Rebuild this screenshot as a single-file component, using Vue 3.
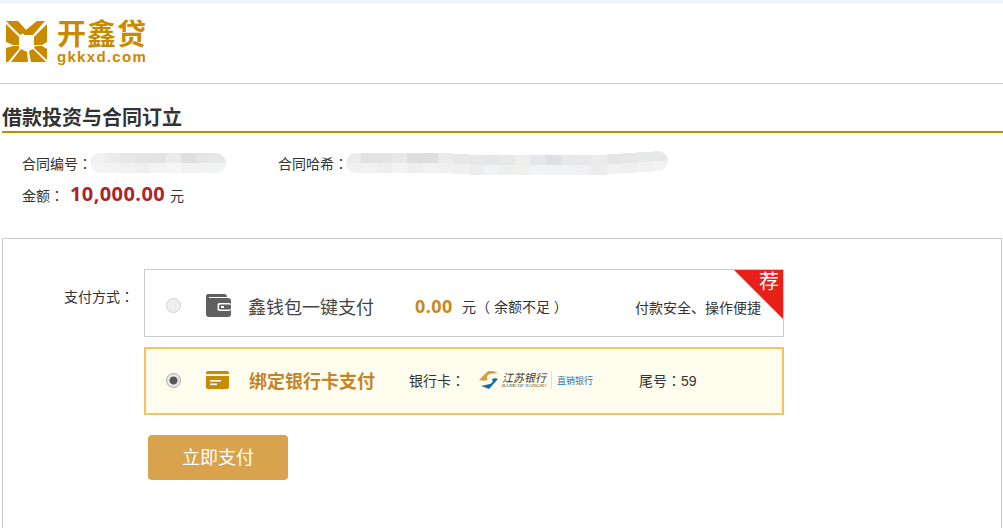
<script setup>
// 打码区域的马赛克色块：上半色、下半色、纵向偏移
const blurA = [
  ['#f1f1f1', '#f4f4f4', 0], ['#ececec', '#f3f3f3', 0], ['#e6e6e6', '#f1f1f1', 0], ['#e4e4e4', '#efefef', 0],
  ['#e3e3e3', '#f4f4f4', 0], ['#ebebeb', '#f5f5f5', 0], ['#dfdfdf', '#f2f2f2', 0], ['#e5e5e5', '#f3f3f3', 0], ['#e6e7e7', '#f1f2f2', 0]
]
const blurB = [
  ['#ebebeb', '#f0f0f0', 0], ['#e2e2e2', '#f1f1f1', 0], ['#e3e3e3', '#eeeeee', 0], ['#e8e8e8', '#f3f3f3', 0],
  ['#dddddd', '#eeeeee', 0], ['#dedede', '#f1f1f1', 0], ['#ebebeb', '#f0f0f0', 0], ['#e8e8e8', '#f0f0f0', 1],
  ['#e7e7e7', '#ededed', 2], ['#e5e7e7', '#f0f2f3', 2], ['#e8e8e6', '#ecefee', 2], ['#efeeec', '#f0f0ee', 2],
  ['#e6e7ea', '#f2f3f4', 2], ['#dfe0e3', '#f1f2f4', 2], ['#e8e8ea', '#f1f2f2', 2], ['#e9e9eb', '#f1f1f1', 2],
  ['#ebebeb', '#ececec', 2], ['#e6e6e6', '#f2f2f2', 1], ['#e6e6e6', '#f0f0f0', 0], ['#e7e8e8', '#f1f1f1', -1],
  ['#e7e8e8', '#f2f2f2', -2]
]
const blockStyle = (c) => ({
  background: `linear-gradient(${c[0]} 50%, ${c[1]} 50%)`,
  transform: `translateY(${c[2]}px)`
})
// logo 的八块色块
const logoPieces = [
  '0,0 12,0 21,10 14,14',
  '0,3 13,16 13,24 7,24 0,21',
  '16,12 31,0 39,0 27,14 19,14',
  '41,3 28,16 28,24 36,24 41,21',
  '0,27 7,25 13,25 13,28 2,41 0,41',
  '5,41 15,28 21,31 22,41',
  '25,41 23,30 27,28 40,41',
  '29,25 36,25 41,28 41,39 28,27'
]
</script>

<template>
  <div class="page">
    <div class="top-band"></div>
    <header class="header">
      <div class="logo">
        <svg class="logo-mark" viewBox="0 0 41 42" width="41" height="42">
          <polygon v-for="(p, i) in logoPieces" :key="i" :points="p" fill="#c98a00" />
        </svg>
        <div class="logo-text">
          <div class="logo-cn">开鑫贷</div>
          <div class="logo-en">gkkxd.com</div>
        </div>
      </div>
    </header>

    <h2 class="title">借款投资与合同订立</h2>

    <div class="info">
      <div class="info-row">
        <div class="field field-no">
          <span>合同编号<span class="colon">：</span></span>
          <div class="mosaic mosaic-a">
            <i v-for="(c, i) in blurA" :key="i" :style="blockStyle(c)"></i>
          </div>
        </div>
        <div class="field">
          <span>合同哈希<span class="colon">：</span></span>
          <div class="mosaic mosaic-b">
            <i v-for="(c, i) in blurB" :key="i" :style="blockStyle(c)"></i>
          </div>
        </div>
      </div>
      <div class="amount-row">
        <span>金额<span class="colon">：</span></span>
        <strong class="amount">10,000.00</strong>
        <span class="unit">元</span>
      </div>
    </div>

    <section class="pay-box">
      <div class="pay-label">支付方式<span class="colon">：</span></div>
      <div class="pay-main">
        <div class="option option-wallet">
          <span class="radio"></span>
          <svg class="opt-icon" viewBox="0 0 25 23" width="25" height="23">
            <path fill="#606060" d="M2 0h16c2 0 3 1 3 3H3.500C2.500 3 2.500 4 3.500 4H22c2 0 3 1 3 3v13c0 2-1 3-3 3H3c-2 0-3-1-3-3V2C0 1 1 0 2 0z" />
            <rect x="11.500" y="9" width="13.500" height="8" rx="2" fill="#fff" />
            <rect x="13" y="10.500" width="12" height="5" rx="1.500" fill="#606060" />
            <rect x="15" y="12" width="3" height="2" fill="#fff" />
          </svg>
          <span class="opt-name">鑫钱包一键支付</span>
          <strong class="balance">0.00</strong>
          <span class="balance-note">元（ 余额不足 ）</span>
          <span class="safe">付款安全、操作便捷</span>
          <div class="corner"><span>荐</span></div>
        </div>

        <div class="option option-on">
          <span class="radio radio-on"></span>
          <svg class="opt-icon card-icon" viewBox="0 0 23 18" width="23" height="18">
            <path fill="#c98a00" d="M0 2C0 .8.800 0 2 0h19c1.200 0 2 .8 2 2v1H0zM0 5h23v11c0 1.200-.8 2-2 2H2c-1.200 0-2-.8-2-2z" />
            <rect x="4" y="9" width="11" height="1.600" fill="#fff" />
            <rect x="4" y="12.500" width="7" height="1.600" fill="#fff" />
          </svg>
          <span class="opt-name opt-name-on">绑定银行卡支付</span>
          <span class="card-label">银行卡<span class="colon">：</span></span>
          <div class="bank">
            <svg viewBox="0 0 20 20" width="20" height="20">
              <path fill="#d3a043" d="M0 10 9 1h5l5 2-8 1c-3 1-4 4-2 6-3 1-6 1-9 0z" />
              <path fill="#1769ad" d="M19 9l-9 10-5-2-3-1 9-2c3-1 3-3 2-5 2-1 4-1 6 0z" />
            </svg>
            <div class="bank-name">
              <span class="bank-cn">江苏银行</span>
              <span class="bank-en">BANK OF JIANGSU</span>
            </div>
            <span class="bank-tag">直销银行</span>
          </div>
          <span class="tail">尾号<span class="colon">：</span>59</span>
        </div>

        <button class="pay-btn" type="button">立即支付</button>
      </div>
    </section>
  </div>
</template>

<style>
html, body {
  margin: 0;
  background: #fff;
  overflow: hidden;
}
</style>

<style scoped>
.page {
  width: 1003px;
  height: 528px;
  overflow: hidden;
  color: #333;
  font-family: "Liberation Sans", "Noto Sans CJK SC", sans-serif;
  font-size: 14px;
}

/* 简中字体的冒号靠左，这里要居中 */
.colon {
  font-family: "Noto Sans CJK TC", sans-serif;
}

.top-band {
  height: 3px;
  background: #eef3f9;
}

.header {
  height: 81px;
  box-sizing: border-box;
  border-bottom: 1px solid #ccc;
  padding: 18px 0 0 6px;
}

.logo {
  display: flex;
  gap: 10px;
}

.logo-mark {
  display: block;
  flex: none;
}

.logo-text {
  color: #c98a00;
  font-weight: 700;
}

.logo-cn {
  font-size: 29px;
  line-height: 28px;
  letter-spacing: 1px;
}

.logo-en {
  font-size: 15px;
  line-height: 15px;
  letter-spacing: 1.300px;
}

.title {
  margin: 0 0 0 2px;
  padding-top: 20px;
  height: 27px;
  line-height: 29px;
  box-sizing: content-box;
  border-bottom: 2px solid #c98a00;
  font-size: 20px;
  font-weight: 700;
  color: #333;
}

.info {
  padding: 18px 0 0 22px;
}

.info-row {
  display: flex;
  height: 24px;
  align-items: center;
}

.field {
  display: flex;
  align-items: center;
}

.field-no {
  width: 256px;
}

.mosaic {
  display: flex;
  height: 20px;
}

.mosaic i {
  display: block;
  flex: 1;
  height: 100%;
}

.mosaic i:first-child {
  border-radius: 10px 0 0 10px;
}

.mosaic i:last-child {
  border-radius: 0 10px 10px 0;
}

.mosaic-a {
  margin-left: -2px;
  width: 136px;
}

.mosaic-b {
  margin-left: -2px;
  width: 322px;
}

.amount-row {
  display: flex;
  align-items: baseline;
  margin-top: 5px;
}

.amount {
  margin: 0 5px 0 6px;
  font-family: "Open Sans", sans-serif;
  font-size: 20px;
  letter-spacing: .4px;
  font-weight: 700;
  color: #a9262c;
}

.unit {
  font-size: 14px;
}

.pay-box {
  display: flex;
  height: 320px;
  box-sizing: border-box;
  margin: 31px 1px 0 2px;
  padding: 30px 0 0 61px;
  border: 1px solid #ccc;
}

.pay-label {
  width: 80px;
  flex: none;
  padding-top: 19px;
  font-size: 14px;
  line-height: 16px;
  white-space: nowrap;
}

.pay-main {
  width: 640px;
}

.option {
  position: relative;
  display: flex;
  align-items: center;
  height: 68px;
  box-sizing: border-box;
  border: 1px solid #ccc;
  overflow: hidden;
}

.option-wallet {
  padding-top: 5px;
}

.option-on {
  margin-top: 10px;
  padding-bottom: 2px;
  border: 2px solid #f3c35c;
  background: #fffeee;
}

.radio {
  flex: none;
  width: 15px;
  height: 15px;
  margin-left: 21px;
  box-sizing: border-box;
  border: 1px solid #d0d0d0;
  border-radius: 50%;
  background: #efefef;
}

.radio-on {
  margin-left: 20px;
  border-color: #aaa;
  background: radial-gradient(circle, #555 0 3.5px, #e8e8e8 4.500px);
}

.opt-icon {
  flex: none;
  margin-left: 25px;
}

.card-icon {
  margin-left: 25px;
}

.opt-name {
  margin-left: 17px;
  width: 167px;
  font-size: 18px;
  color: #444;
  white-space: nowrap;
}

.opt-name-on {
  margin-left: 20px;
  width: 160px;
  font-weight: 700;
  color: #c4852a;
}

.balance {
  font-family: "Open Sans", sans-serif;
  font-size: 18px;
  letter-spacing: .4px;
  color: #c98a1e;
  width: 47px;
}

.balance-note {
  width: 173px;
  font-size: 14px;
  white-space: nowrap;
}

.safe {
  padding-top: 2px;
  font-size: 14px;
  white-space: nowrap;
}

.corner {
  position: absolute;
  top: -1px;
  right: -1px;
  width: 0;
  height: 0;
  border-top: 51px solid #e8201a;
  border-left: 51px solid transparent;
}

.corner span {
  position: absolute;
  top: -51px;
  right: 5px;
  color: #fff;
  font-size: 20px;
  line-height: 26px;
}

.card-label {
  font-size: 14px;
  width: 70px;
  white-space: nowrap;
}

.bank {
  display: flex;
  align-items: center;
  width: 160px;
}

.bank-name {
  display: flex;
  flex-direction: column;
  margin-left: 3px;
  padding-right: 5px;
  border-right: 1px solid #dde3d0;
  width: 44px;
}

.bank-cn {
  font-family: "Noto Sans CJK SC", sans-serif;
  font-size: 11px;
  line-height: 12px;
  color: #333;
  font-style: italic;
}

.bank-en {
  font-family: "Liberation Serif", serif;
  font-size: 5px;
  line-height: 6px;
  color: #444;
  white-space: nowrap;
}

.bank-tag {
  margin-left: 5px;
  font-size: 9px;
  color: #2f76ad;
  white-space: nowrap;
}

.tail {
  font-size: 14px;
  white-space: nowrap;
}

.pay-btn {
  display: block;
  width: 140px;
  height: 45px;
  margin: 20px 0 0 4px;
  padding: 0 0 3px;
  border: 0;
  border-radius: 4px;
  background: #d8a34c;
  color: #fff;
  font-family: inherit;
  font-size: 18px;
}
</style>
